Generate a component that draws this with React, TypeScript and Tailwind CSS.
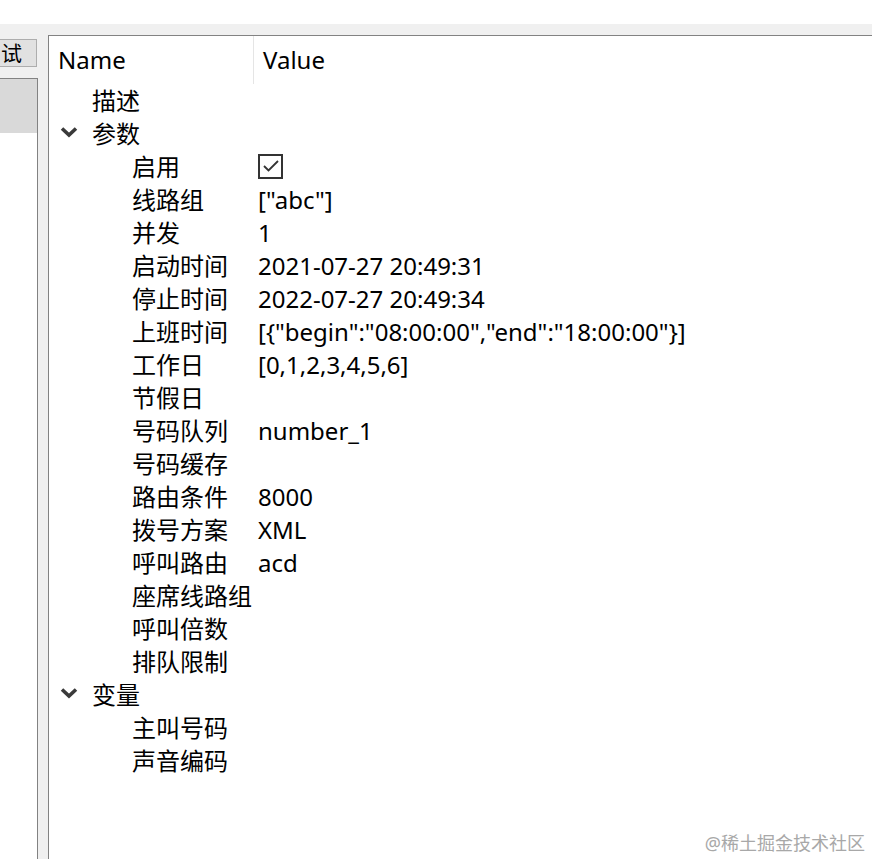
import React from "react";

type Row = { name: string; value?: string; level: number; expanded?: boolean; check?: boolean };

const rows: Row[] = [
  { name: "描述", level: 0 },
  { name: "参数", level: 0, expanded: true },
  { name: "启用", level: 1, check: true },
  { name: "线路组", level: 1, value: '["abc"]' },
  { name: "并发", level: 1, value: "1" },
  { name: "启动时间", level: 1, value: "2021-07-27 20:49:31" },
  { name: "停止时间", level: 1, value: "2022-07-27 20:49:34" },
  { name: "上班时间", level: 1, value: '[{"begin":"08:00:00","end":"18:00:00"}]' },
  { name: "工作日", level: 1, value: "[0,1,2,3,4,5,6]" },
  { name: "节假日", level: 1 },
  { name: "号码队列", level: 1, value: "number_1" },
  { name: "号码缓存", level: 1 },
  { name: "路由条件", level: 1, value: "8000" },
  { name: "拨号方案", level: 1, value: "XML" },
  { name: "呼叫路由", level: 1, value: "acd" },
  { name: "座席线路组", level: 1 },
  { name: "呼叫倍数", level: 1 },
  { name: "排队限制", level: 1 },
  { name: "变量", level: 0, expanded: true },
  { name: "主叫号码", level: 1 },
  { name: "声音编码", level: 1 },
];

function Chevron() {
  return (
    <svg width="18" height="12" viewBox="0 0 18 12" className="absolute left-[11px] top-[9px]">
      <path d="M2 2.5 L9 9 L16 2.5" fill="none" stroke="#3a3a3a" strokeWidth="3.6" />
    </svg>
  );
}

function CheckBox() {
  return (
    <div className="w-[25px] h-[25px] border-2 border-[#333333] bg-white flex items-center justify-center mt-[-1px]">
      <svg width="18" height="14" viewBox="0 0 18 14">
        <path d="M2 7 L6.5 11.5 L16 2" fill="none" stroke="#333333" strokeWidth="1.8" />
      </svg>
    </div>
  );
}

export default function App() {
  return (
    <div
      className="relative w-[872px] h-[859px] bg-white overflow-hidden text-black"
      style={{ fontFamily: '"Noto Sans", "Noto Sans CJK SC", sans-serif' }}
    >
      <div className="h-[24px] bg-white" />
      <div className="flex h-[835px] bg-[#f0f0f0]">
        {/* left side tabs / list */}
        <div className="w-[38px] flex flex-col">
          <div className="mt-[15px] h-[28px] w-[37px] bg-[#e1e1e1] border border-[#adadad] border-l-0 flex items-center">
            <span className="text-[21px] leading-none whitespace-nowrap pl-[1px]">试</span>
          </div>
          <div className="mt-[11px] flex-1 bg-white border-r border-t border-[#828282]">
            <div className="h-[54px] bg-[#d9d9d9]" />
          </div>
        </div>
        <div className="w-[10px]" />
        {/* property tree */}
        <div className="flex-1 mt-[11px] bg-white border-l border-t border-[#828282]">
          <div className="flex h-[48px] text-[24px]">
            <div className="w-[205px] pl-[9px] flex items-center border-r border-[#e5e5e5]">Name</div>
            <div className="pl-[9px] flex items-center">Value</div>
          </div>
          {rows.map((r, i) => (
            <div key={i} className="flex h-[33px] text-[24px] leading-[33px]">
              <div className={`relative w-[206px] whitespace-nowrap ${r.level === 0 ? "pl-[43px]" : "pl-[83px]"}`}>
                {r.expanded && <Chevron />}
                {r.name}
              </div>
              <div className="pl-[3px] flex items-center whitespace-nowrap">
                {r.check ? <CheckBox /> : r.value}
              </div>
            </div>
          ))}
        </div>
      </div>
      <div className="absolute right-[7px] bottom-[7px] text-[18px] leading-none text-[#a8a8a8]">@稀土掘金技术社区</div>
    </div>
  );
}
